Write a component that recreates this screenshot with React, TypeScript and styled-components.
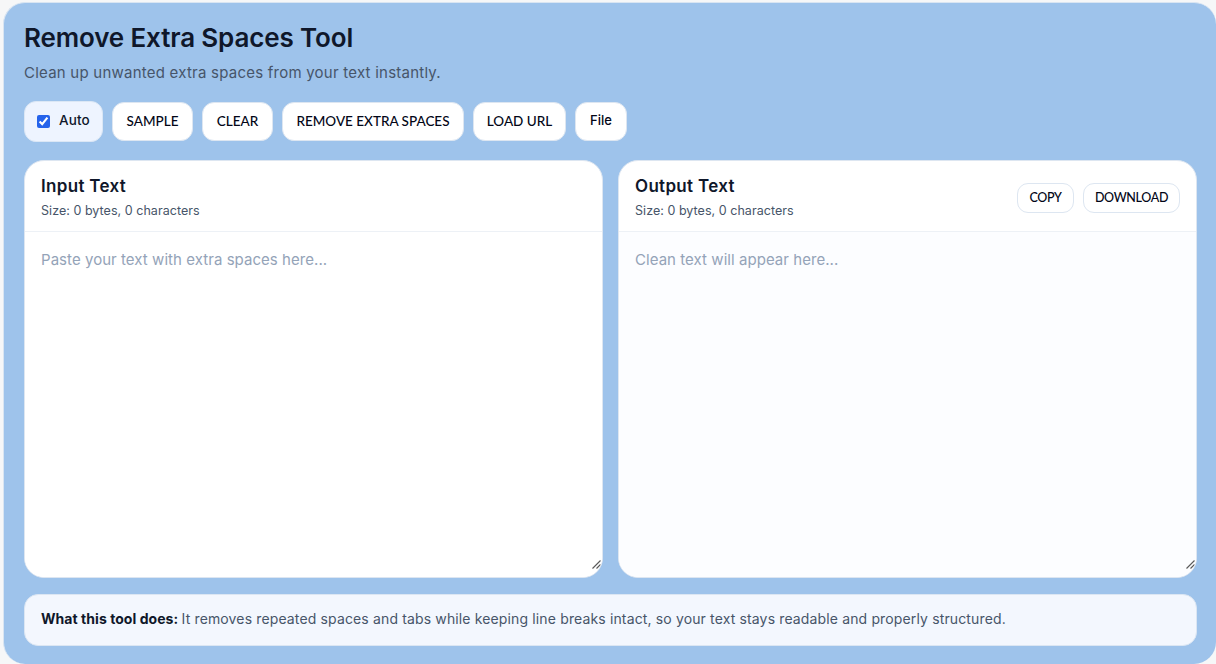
import React from "react";
import styled, { createGlobalStyle } from "styled-components";

const Global = createGlobalStyle`
  html, body { margin: 0; padding: 0; background: #f6f7f8; }
  body { font-family: Inter, "Noto Sans", sans-serif; overflow: hidden; }
  * { box-sizing: border-box; }
`;

const Page = styled.main`
  width: 1216px;
  height: 664px;
  padding: 2px 0 0 3px;
`;

const Shell = styled.section`
  height: 662px;
  padding: 20px 19px 17px 20px;
  background: #9ec3eb;
  border: 1px solid #d9e5f2;
  border-bottom: 0;
  border-right: 0;
  border-radius: 22px;
  display: flex;
  flex-direction: column;
`;

const Title = styled.h1`
  margin: 0;
  font-size: 26px;
  line-height: 30px;
  font-weight: 600;
  letter-spacing: -0.14px;
  color: #0f172a;
`;

const Subtitle = styled.p`
  margin: 10px 0 0;
  font-size: 15px;
  line-height: 20px;
  color: #475569;
  letter-spacing: 0.23px;
`;

const Toolbar = styled.div`
  display: flex;
  align-items: center;
  gap: 9px;
  margin-top: 18px;
  height: 41px;
`;

const AutoLabel = styled.label`
  display: flex;
  align-items: center;
  gap: 9px;
  width: 79px;
  height: 41px;
  padding: 0 0 4px 12px;
  background: #eef4ff;
  border: 1px solid #dbe7f5;
  border-radius: 12px;
  font-size: 13.5px;
  font-weight: 500;
  letter-spacing: 0.1px;
  color: #0f172a;
`;

const AutoCheck = styled.input`
  width: 13px;
  height: 13px;
  margin: 4px 0 0;
  accent-color: #2563eb;
`;

const ToolButton = styled.button<{ $w: number }>`
  width: ${(p) => p.$w}px;
  height: 39px;
  padding: 0 0 2px;
  background: #fff;
  border: 1px solid #dde6f1;
  border-radius: 12px;
  font-family: Lato, sans-serif;
  font-size: 13.5px;
  font-weight: 500;
  color: #020617;
`;

const FileButton = styled(ToolButton)`
  font-family: Inter, sans-serif;
  font-size: 13px;
  padding-bottom: 3px;
`;

const Editors = styled.div`
  display: grid;
  grid-template-columns: 579px 579px;
  gap: 15px;
  margin-top: 18px;
  height: 418px;
`;

const Card = styled.div`
  position: relative;
  display: flex;
  flex-direction: column;
  min-height: 0;
  background: #fff;
  border: 1px solid #dde6f1;
  border-radius: 20px;
  overflow: hidden;
`;

const CardHeader = styled.header`
  flex: none;
  height: 71px;
  padding: 14px 16px 0;
  display: flex;
  justify-content: space-between;
  border-bottom: 1px solid #edf1f6;
`;

const CardTitle = styled.h2`
  margin: 0;
  font-size: 17px;
  line-height: 22px;
  font-weight: 600;
  color: #0f172a;
  letter-spacing: 0.32px;
`;

const Meta = styled.div`
  margin-top: 5px;
  font-size: 12.5px;
  line-height: 18px;
  color: #475569;
  letter-spacing: 0.04px;
`;

const Actions = styled.div`
  display: flex;
  gap: 9px;
  margin-top: 8px;
  align-items: flex-start;
`;

const SmallButton = styled.button<{ $w: number }>`
  width: ${(p) => p.$w}px;
  height: 30px;
  padding: 0 0 2px;
  background: #fff;
  border: 1px solid #dde6f1;
  border-radius: 11px;
  font-family: Lato, sans-serif;
  font-size: 12.5px;
  font-weight: 500;
  letter-spacing: -0.34px;
  color: #020617;
`;

const TextArea = styled.textarea<{ $tint?: boolean }>`
  flex: 1;
  display: block;
  width: 100%;
  min-height: 0;
  padding: 17px 16px;
  border: 0;
  outline: 0;
  resize: none;
  background: ${(p) => (p.$tint ? "#fcfdff" : "#fff")};
  font-family: Inter, sans-serif;
  font-size: 15px;
  letter-spacing: 0.05px;
  line-height: 22px;
  color: #0f172a;
  &::placeholder { color: #94a3b8; opacity: 1; }
`;

const GripSvg = styled.svg`
  position: absolute;
  right: 1px;
  bottom: 8px;
  width: 9px;
  height: 9px;
`;

const Grip = () => (
  <GripSvg viewBox="0 0 9 9" aria-hidden="true">
    <path d="M0.5 8.5 L8.5 0.5 M4.5 8.5 L8.5 4.5" stroke="#5a5a5a" strokeWidth="1.1" fill="none" />
  </GripSvg>
);

const Note = styled.aside`
  margin-top: 16px;
  height: 52px;
  width: 1173px;
  padding: 0 16px 3px;
  display: flex;
  align-items: center;
  background: #f3f7fe;
  border: 1px solid #dbe6f3;
  border-radius: 14px;
  font-size: 14px;
  color: #475569;
  letter-spacing: 0.14px;
  white-space: pre;
`;

const NoteLead = styled.strong`
  font-weight: 700;
  color: #0f172a;
  letter-spacing: 0.05px;
`;

export default function App() {
  return (
    <Page>
      <Global />
      <Shell>
        <Title>Remove Extra Spaces Tool</Title>
        <Subtitle>Clean up unwanted extra spaces from your text instantly.</Subtitle>
        <Toolbar>
          <AutoLabel>
            <AutoCheck type="checkbox" defaultChecked />
            Auto
          </AutoLabel>
          <ToolButton $w={81}>SAMPLE</ToolButton>
          <ToolButton $w={71}>CLEAR</ToolButton>
          <ToolButton $w={182}>REMOVE EXTRA SPACES</ToolButton>
          <ToolButton $w={93}>LOAD URL</ToolButton>
          <FileButton $w={52}>File</FileButton>
        </Toolbar>
        <Editors>
          <Card>
            <CardHeader>
              <div>
                <CardTitle>Input Text</CardTitle>
                <Meta>Size: 0 bytes, 0 characters</Meta>
              </div>
            </CardHeader>
            <TextArea placeholder="Paste your text with extra spaces here..." />
            <Grip />
          </Card>
          <Card>
            <CardHeader>
              <div>
                <CardTitle>Output Text</CardTitle>
                <Meta>Size: 0 bytes, 0 characters</Meta>
              </div>
              <Actions>
                <SmallButton $w={57}>COPY</SmallButton>
                <SmallButton $w={97}>DOWNLOAD</SmallButton>
              </Actions>
            </CardHeader>
            <TextArea $tint readOnly placeholder="Clean text will appear here..." />
            <Grip />
          </Card>
        </Editors>
        <Note>
          <NoteLead>What this tool does: </NoteLead>
          It removes repeated spaces and tabs while keeping line breaks intact, so your text stays readable and properly structured.
        </Note>
      </Shell>
    </Page>
  );
}
